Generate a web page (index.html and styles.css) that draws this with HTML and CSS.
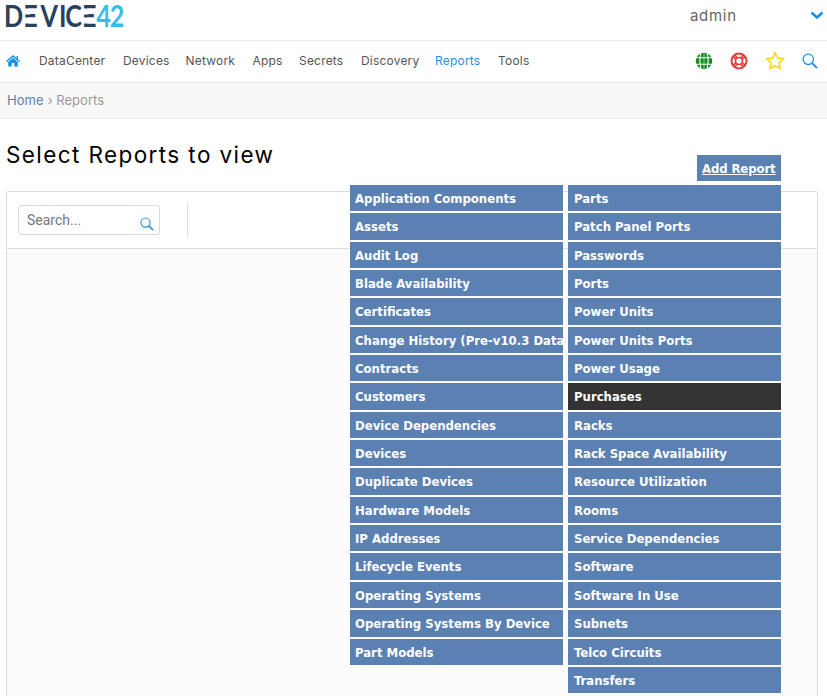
FILE: index.html
```
<!DOCTYPE html>
<html lang="en">
<head>
<meta charset="utf-8">
<title>Select Reports to view</title>
<link rel="stylesheet" href="styles.css">
</head>
<body>
<header class="top">
  <svg class="logo" width="126" height="36" viewBox="0 0 126 36" role="img" aria-label="DEVICE42">
    <text class="mark" transform="scale(.84 1)" y="27" x="3.700 26.500 47 69 76.500 96.300">DEVICE</text>
    <path class="gap" d="M23.500 8.600h5.500v5.900h-5.500zM23.500 17.600h5.500v6h-5.500zM82 8.600h5.500v5.900h-5.500zM82 17.600h5.500v6h-5.500z"/>
    <text class="mark num" transform="scale(.84 1)" y="27" x="113.500 129.500">42</text>
  </svg>
  <div class="user"><span>admin</span><svg width="14" height="9" viewBox="0 0 14 9"><path d="M1.500 1.500 7 6.500l5.500-5" fill="none" stroke="#1592e6" stroke-width="2.500"/></svg></div>
</header>
<nav class="nav">
  <svg class="home" width="14" height="12" viewBox="0 0 14 12"><path d="M7 2.800 2.200 7v4.500h3.500V8h2.600v3.500h3.500V7z" fill="#1592e6"/><path d="M.5 6.500 7 1l6.500 5.500M11.300 1v3" fill="none" stroke="#1592e6" stroke-width="1.500"/></svg>
  <a class="n1">DataCenter</a><a class="n2">Devices</a><a class="n3">Network</a><a class="n4">Apps</a><a class="n5">Secrets</a><a class="n6">Discovery</a><a class="n7 active">Reports</a><a class="n8">Tools</a>
  <div class="icons">
    <svg width="18" height="18" viewBox="0 0 18 18"><circle cx="9" cy="9" r="8.300" fill="#168a24"/><path d="M1 5.700h16M1 12.300h16M6 1Q3.800 9 6 17M12 1q2.200 8 0 16" fill="none" stroke="#fff" stroke-width="1.100"/><path d="M9 .5v17" stroke="#fff" stroke-width=".5"/></svg>
    <svg width="18" height="18" viewBox="0 0 18 18" fill="none" stroke="#e53b3b"><circle cx="9" cy="9" r="7.500" stroke-width="2"/><circle cx="9" cy="9" r="3.500" stroke-width="1.700"/><path d="m3 4.800 3 2.400M4.800 3l2.400 3M15 4.800l-3 2.400M13.200 3l-2.400 3M3 13.200l3-2.400M4.800 15l2.400-3M15 13.200l-3-2.400M13.200 15l-2.400-3" stroke-width="1.600"/></svg>
    <svg width="20" height="19" viewBox="0 0 20 19"><path d="m10 1.800 2.400 5.300 5.800.7-4.200 4 1.100 5.700L10 14.700l-5.100 2.800L6 11.800l-4.200-4 5.800-.7z" fill="none" stroke="#ffd51a" stroke-width="1.600"/></svg>
    <svg width="16" height="16" viewBox="0 0 16 16" fill="none" stroke="#2391e4"><circle cx="6.300" cy="6.300" r="5.200" stroke-width="1.300"/><path d="m10 10 5 5" stroke-width="1.800"/></svg>
  </div>
</nav>
<div class="crumbs"><a>Home</a><span class="sep">›</span><span>Reports</span></div>
<main>
  <h1>Select Reports to view</h1>
  <section class="panel">
    <div class="tools">
      <div class="search"><span>Search...</span><svg viewBox="0 0 16 16" fill="none" stroke="#2391e4"><circle cx="6.300" cy="6.300" r="5.200" stroke-width="1.300"/><path d="m10 10 5 5" stroke-width="1.800"/></svg></div>
      <div class="rule"></div>
    </div>
  </section>
</main>
<div class="menu">
  <a class="add">Add Report</a>
  <div class="cols">
    <div class="col">
      <a>Application Components</a><a>Assets</a><a>Audit Log</a><a>Blade Availability</a><a>Certificates</a><a>Change History (Pre-v10.3 Data)</a><a>Contracts</a><a>Customers</a><a>Device Dependencies</a><a>Devices</a><a>Duplicate Devices</a><a>Hardware Models</a><a>IP Addresses</a><a>Lifecycle Events</a><a>Operating Systems</a><a>Operating Systems By Device</a><a>Part Models</a>
    </div>
    <div class="col right">
      <a>Parts</a><a>Patch Panel Ports</a><a>Passwords</a><a>Ports</a><a>Power Units</a><a>Power Units Ports</a><a>Power Usage</a><a class="hover">Purchases</a><a>Racks</a><a>Rack Space Availability</a><a>Resource Utilization</a><a>Rooms</a><a>Service Dependencies</a><a>Software</a><a>Software In Use</a><a>Subnets</a><a>Telco Circuits</a><a>Transfers</a>
    </div>
  </div>
</div>
</body>
</html>
```
FILE: styles.css
```
* { box-sizing: border-box; }
body { margin: 0; height: 696px; overflow: hidden; background: #fff; font-family: Inter, "Liberation Sans", sans-serif; color: #555; display: flex; flex-direction: column; }
svg { display: block; flex: none; }
.top { height: 41px; flex: none; border-bottom: 1px solid #e9e9e9; display: flex; justify-content: space-between; }
.logo { margin-left: 1px; overflow: visible; }
.mark { font: 700 30px Lato, sans-serif; fill: #29415c; }
.num { fill: #35bdec; }
.gap { fill: #fff; }
.user { width: 137px; height: 31px; display: flex; align-items: center; justify-content: space-between; padding-right: 3px; font-size: 15px; letter-spacing: .7px; color: #666; }
.nav { height: 42px; flex: none; border-bottom: 1px solid #e9e9e9; display: flex; align-items: center; padding: 0 0 2px 6px; font-size: 12px; letter-spacing: .2px; }
.nav a { white-space: nowrap; line-height: 14px; }
.home { margin-right: 19px; }
.n1 { width: 84px; }
.n2 { width: 62.500px; }
.n3 { width: 67px; }
.n4 { width: 46.500px; }
.n5 { width: 62px; }
.n6 { width: 74px; }
.n7 { width: 63px; }
.nav .active { color: #2391e4; }
.icons { margin-left: auto; padding-right: 9px; display: flex; align-items: center; gap: 17px; }
.crumbs { height: 36px; flex: none; background: #f8f8f8; border-bottom: 1px solid #e9e9e9; padding-left: 7px; font-size: 13px; line-height: 35px; color: #999; letter-spacing: .05px; }
.crumbs a { color: #5b80b2; }
.sep { margin: 0 3.500px 0 4px; }
main { flex: 1; padding: 0 9px 0 6px; display: flex; flex-direction: column; }
h1 { margin: 0; height: 72px; padding: 22px 0 0; font-size: 22.500px; line-height: 28px; font-weight: 400; letter-spacing: 1.400px; color: #000; }
.panel { flex: 1; border: 1px solid #ddd; border-bottom: 0; border-radius: 3px 3px 0 0; background: #fbfbfb; }
.tools { height: 57px; background: #fff; border-bottom: 1px solid #ddd; display: flex; align-items: center; padding-left: 11px; border-radius: 3px 3px 0 0; }
.search { width: 142px; height: 30px; border: 1px solid #d8d8d8; border-radius: 3px; display: flex; justify-content: space-between; padding: 0 5px 0 8px; font: 14px/28px Roboto, sans-serif; color: #777; }
.search svg { margin-top: 11px; width: 14px; height: 14px; }
.rule { width: 1px; height: 34px; background: #ddd; margin-left: 27px; }
.menu { position: absolute; left: 350px; top: 155px; width: 431px; font: 700 13px "DejaVu Sans Condensed", "DejaVu Sans", sans-serif; font-stretch: semi-condensed; color: #fff; display: flex; flex-direction: column; align-items: flex-end; }
.add { width: 84px; height: 26px; line-height: 27px; padding-left: 5px; background: #5b80b2; text-decoration: underline; white-space: nowrap; letter-spacing: -.1px; }
.cols { display: flex; gap: 5px; margin-top: 4px; align-items: flex-start; }
.col { width: 213px; display: flex; flex-direction: column; gap: 2px; }
.col a { height: 26.350px; line-height: 27px; padding-left: 5px; background: #5b80b2; overflow: hidden; white-space: nowrap; }
.right a { padding-left: 6px; }
.col .hover { background: #333; }
```
